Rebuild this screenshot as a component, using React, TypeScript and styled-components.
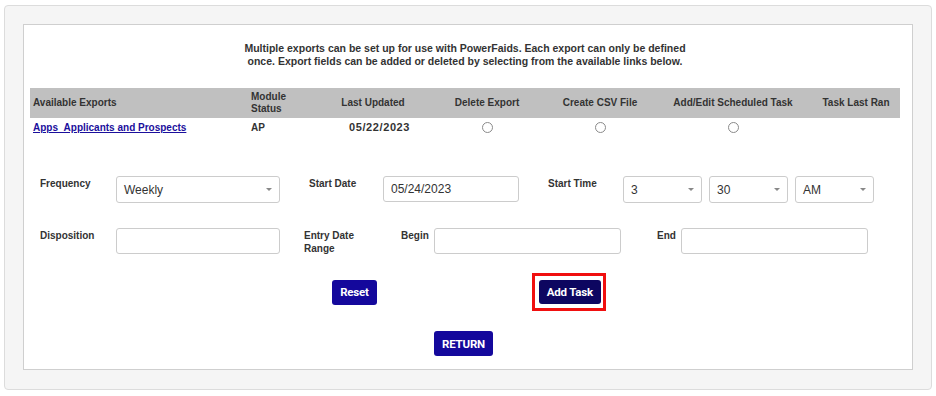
import * as React from 'react'
import styled, { createGlobalStyle } from 'styled-components'

const GlobalStyle = createGlobalStyle`
    body {
        margin: 0;
        background: white;
        font-family: 'Liberation Sans', Arial, sans-serif;
    }
`

const Outer = styled.div`
    box-sizing: border-box;
    margin: 5px 0 0 4px;
    width: 928px;
    height: 385px;
    padding: 18px;
    background: #f5f5f5;
    border: 1px solid #dcdcdc;
    border-radius: 4px;
`

const Panel = styled.div`
    box-sizing: border-box;
    width: 890px;
    height: 346px;
    padding: 17px 12px 0 6px;
    background: white;
    border: 1px solid #cfcfcf;
`

const Intro = styled.p`
    margin: 0 0 20px;
    text-align: center;
    font-size: 10.5px;
    font-weight: bold;
    line-height: 13px;
    color: #333;
`

const Table = styled.table`
    width: 870px;
    border-collapse: collapse;
    table-layout: fixed;
    font-size: 10px;
    color: #333;
`

const Th = styled.th<{ $w: number; $align?: string }>`
    width: ${p => p.$w - 6}px;
    height: 30px;
    padding: 0 3px;
    background: #c0c0c0;
    text-align: ${p => p.$align || 'center'};
    font-weight: bold;
    line-height: 12px;
`

const Td = styled.td<{ $align?: string }>`
    height: 18px;
    padding: 0 3px;
    text-align: ${p => p.$align || 'center'};
    font-weight: bold;
    vertical-align: middle;
`

const DateCell = styled(Td)`
    padding-left: 31px;
    font-size: 11px;
    letter-spacing: 0.6px;
`

const ExportLink = styled.a`
    color: #1b0f9c;
    text-decoration: underline;
    font-weight: bold;
    cursor: pointer;
`

const Radio = styled.span`
    display: inline-block;
    width: 9px;
    height: 9px;
    border: 1px solid #8a8a8a;
    border-radius: 50%;
    vertical-align: middle;
`

const Form = styled.div`
    display: flex;
    flex-direction: column;
    gap: 25px;
    margin-top: 40px;
    padding-left: 10px;
`

const Row = styled.div`
    display: flex;
    align-items: flex-start;
`

const Label = styled.div<{ $w: number; $ml?: number }>`
    box-sizing: border-box;
    width: ${p => p.$w}px;
    margin-left: ${p => p.$ml || 0}px;
    padding-top: 1px;
    font-size: 10px;
    font-weight: bold;
    line-height: 13px;
    color: #333;
`

const Box = styled.div<{ $w: number; $h?: number; $ml?: number }>`
    box-sizing: border-box;
    position: relative;
    display: flex;
    align-items: center;
    width: ${p => p.$w}px;
    height: ${p => p.$h || 26}px;
    margin-left: ${p => p.$ml || 0}px;
    padding: 0 7px;
    border: 1px solid #cccccc;
    border-radius: 3px;
    background: white;
    font-size: 12px;
    color: #333;
`

const Caret = styled.span`
    position: absolute;
    right: 7px;
    top: 50%;
    margin-top: -2px;
    width: 0;
    height: 0;
    border-left: 3px solid transparent;
    border-right: 3px solid transparent;
    border-top: 3px solid #888;
`

const Buttons = styled.div`
    display: flex;
    justify-content: center;
    align-items: center;
    gap: 155px;
    margin-top: 18px;
    padding-left: 8px;
`

const Button = styled.button<{ $dark?: boolean }>`
    height: ${p => (p.$dark ? 24 : 25)}px;
    padding: 0 8px;
    border: none;
    border-radius: 3px;
    background: ${p => (p.$dark ? '#0d0660' : '#14089c')};
    color: white;
    font-family: Roboto, 'Liberation Sans', sans-serif;
    font-size: 11.5px;
    font-weight: bold;
    letter-spacing: -0.2px;
    cursor: pointer;
`

const Highlight = styled.div`
    padding: 4px 2px 4px 4px;
    border: 3px solid #f00f0f;
    display: flex;
`

const ReturnRow = styled.div`
    display: flex;
    justify-content: center;
    margin-top: 20px;
    padding-right: 3px;
`

const Select: React.FunctionComponent<{ w: number; ml?: number; value: string }> = (props): JSX.Element => (
    <Box $w={props.w} $h={27} $ml={props.ml}>
        {props.value}
        <Caret />
    </Box>
)

const App: React.FunctionComponent = (): JSX.Element => {
    return (
        <>
            <GlobalStyle />
            <Outer>
                <Panel>
                    <Intro>
                        Multiple exports can be set up for use with PowerFaids. Each export can only be defined
                        <br />
                        once. Export fields can be added or deleted by selecting from the available links below.
                    </Intro>
                    <Table>
                        <thead>
                            <tr>
                                <Th $w={218} $align='left'>Available Exports</Th>
                                <Th $w={70} $align='left'>Module<br />Status</Th>
                                <Th $w={110}>Last Updated</Th>
                                <Th $w={118}>Delete Export</Th>
                                <Th $w={108}>Create CSV File</Th>
                                <Th $w={158}>Add/Edit Scheduled Task</Th>
                                <Th $w={88}>Task Last Ran</Th>
                            </tr>
                        </thead>
                        <tbody>
                            <tr>
                                <Td $align='left'><ExportLink>Apps_Applicants and Prospects</ExportLink></Td>
                                <Td $align='left'>AP</Td>
                                <DateCell $align='left'>05/22/2023</DateCell>
                                <Td><Radio /></Td>
                                <Td><Radio /></Td>
                                <Td><Radio /></Td>
                                <Td />
                            </tr>
                        </tbody>
                    </Table>
                    <Form>
                        <Row>
                            <Label $w={76}>Frequency</Label>
                            <Select w={164} value='Weekly' />
                            <Label $w={74} $ml={29}>Start Date</Label>
                            <Box $w={136}>05/24/2023</Box>
                            <Label $w={75} $ml={29}>Start Time</Label>
                            <Select w={79} value='3' />
                            <Select w={79} ml={7} value='30' />
                            <Select w={79} ml={7} value='AM' />
                        </Row>
                        <Row>
                            <Label $w={76}>Disposition</Label>
                            <Box $w={164} />
                            <Label $w={97} $ml={24}>Entry Date<br />Range</Label>
                            <Label $w={33}>Begin</Label>
                            <Box $w={187} />
                            <Label $w={24} $ml={36}>End</Label>
                            <Box $w={187} />
                        </Row>
                    </Form>
                    <Buttons>
                        <Button>Reset</Button>
                        <Highlight>
                            <Button $dark>Add Task</Button>
                        </Highlight>
                    </Buttons>
                    <ReturnRow>
                        <Button>RETURN</Button>
                    </ReturnRow>
                </Panel>
            </Outer>
        </>
    )
}

export default App
